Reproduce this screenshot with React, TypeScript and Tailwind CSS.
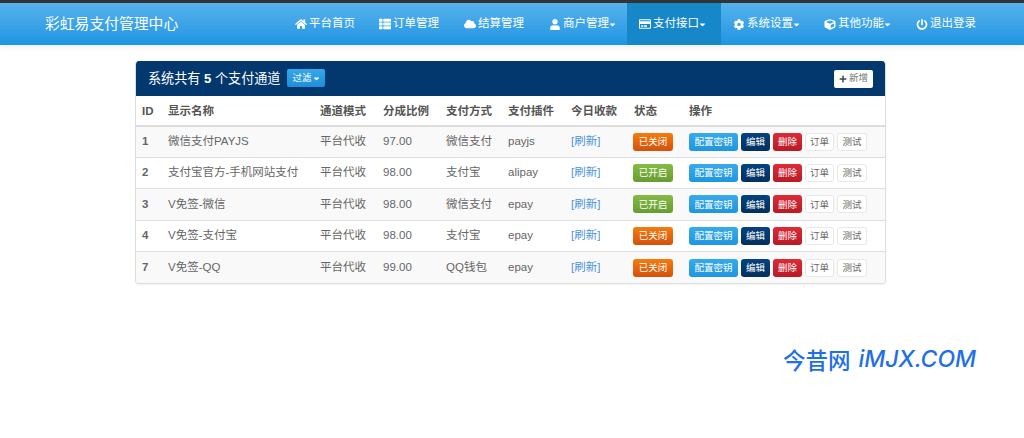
import { FaCaretDown, FaCloud, FaCog, FaCube, FaHome, FaPlus, FaPowerOff, FaRegCreditCard, FaThList, FaUser } from "react-icons/fa";
import type { IconType } from "react-icons";

const NAV: { label: string; icon: IconType; width: string; size: string; caret?: boolean; active?: boolean }[] = [
  { label: "平台首页", icon: FaHome, width: "w-[84px]", size: "h-[12px] w-[12px]" },
  { label: "订单管理", icon: FaThList, width: "w-[85px]", size: "h-[12px] w-[12px]" },
  { label: "结算管理", icon: FaCloud, width: "w-[85px]", size: "h-[12px] w-[12px]" },
  { label: "商户管理", icon: FaUser, width: "w-[90px]", size: "h-[11px] w-[12px]", caret: true },
  { label: "支付接口", icon: FaRegCreditCard, width: "w-[94px]", size: "h-[12px] w-[12px]", caret: true, active: true },
  { label: "系统设置", icon: FaCog, width: "w-[91px]", size: "h-[11px] w-[12px]", caret: true },
  { label: "其他功能", icon: FaCube, width: "w-[92px]", size: "h-[11px] w-[12px]", caret: true },
  { label: "退出登录", icon: FaPowerOff, width: "w-[84px]", size: "h-[11px] w-[12px]" },
];

const ROWS = [
  { id: 1, name: "微信支付PAYJS", ratio: "97.00", way: "微信支付", plugin: "payjs", on: false },
  { id: 2, name: "支付宝官方-手机网站支付", ratio: "98.00", way: "支付宝", plugin: "alipay", on: true },
  { id: 3, name: "V免签-微信", ratio: "98.00", way: "微信支付", plugin: "epay", on: true },
  { id: 4, name: "V免签-支付宝", ratio: "98.00", way: "支付宝", plugin: "epay", on: false },
  { id: 7, name: "V免签-QQ", ratio: "99.00", way: "QQ钱包", plugin: "epay", on: false },
];

const HEADS = ["ID", "显示名称", "通道模式", "分成比例", "支付方式", "支付插件", "今日收款", "状态", "操作"];
const WIDTHS = ["w-[25px]", "w-[152px]", "w-[63px]", "w-[63px]", "w-[62px]", "w-[63px]", "w-[63px]", "w-[55px]", ""];
const PADS = ["pl-[6px]", "pl-[7px]", "pl-[7px]", "pl-[7px]", "pl-[7px]", "pl-[7px]", "pl-[7px]", "pl-[7px]", "pl-[7px]"];

const BTN = "flex h-[18px] items-center justify-center rounded-[3px] text-[9.5px] leading-none";

export default function App() {
  return (
    <div className="relative min-h-[438px] bg-white font-['Liberation_Sans','Noto_Sans_CJK_SC',sans-serif] text-[11.5px] text-[#666]">
      {/* 顶部导航 */}
      <nav className="flex h-[45px] items-stretch justify-between border-t-[3px] border-[#333] bg-linear-to-b from-[#55b2ec] to-[#1b95e2] pl-[45px] pr-[36px] text-white shadow-[0_2px_6px_rgba(0,0,0,0.08)]">
        <div className="flex items-center text-[14.8px]">彩虹易支付管理中心</div>
        <div className="flex items-stretch">
          {NAV.map(item => (
            <div key={item.label} className={`flex items-center pl-[12px] ${item.width} ${item.active ? "bg-[#1688c9]" : ""}`}>
              <item.icon className={`mr-[2px] shrink-0 ${item.size}`} />
              <span>{item.label}</span>
              {item.caret && <FaCaretDown className="h-[9px] w-[7px] shrink-0" />}
            </div>
          ))}
        </div>
      </nav>

      {/* 支付通道列表 */}
      <div className="ml-[135px] mt-[16px] w-[751px] overflow-hidden rounded-[4px] border border-t-0 border-[#ddd] shadow-[0_1px_2px_rgba(0,0,0,0.05)]">
        <div className="flex h-[35px] items-center justify-between bg-[#03386f] pl-[12px] pr-[12px] text-[13.1px] text-white">
          <div className="flex items-center">
            <span>系统共有 <b>5</b> 个支付通道</span>
            <span className="ml-[7px] flex h-[18px] w-[38px] items-center justify-center gap-[2px] rounded-[2px] bg-linear-to-b from-[#34a8ea] to-[#1e8fd8] text-[9.5px]">
              过滤<FaCaretDown className="h-[9px] w-[7px]" />
            </span>
          </div>
          <span className="flex h-[18px] w-[39px] items-center justify-center gap-[2px] rounded-[2px] bg-white text-[9.5px] text-[#777]">
            <FaPlus className="h-[8px] w-[8px] text-[#444]" />新增
          </span>
        </div>
        <table className="w-full table-fixed border-collapse">
          <thead>
            <tr className="h-[30px] border-b-2 border-[#ddd] text-left text-[#555]">
              {HEADS.map((h, i) => (
                <th key={h} className={`p-0 pt-[2px] font-bold ${PADS[i]} ${WIDTHS[i]}`}>{h}</th>
              ))}
            </tr>
          </thead>
          <tbody>
            {ROWS.map((r, i) => (
              <tr key={r.id} className={`h-[31.4px] border-b border-[#ddd] last:border-b-0 ${i % 2 === 0 ? "bg-[#f9f9f9]" : "bg-white"}`}>
                <td className="p-0 pl-[6px] font-bold">{r.id}</td>
                <td className="p-0 pl-[7px]">{r.name}</td>
                <td className="p-0 pl-[7px]">平台代收</td>
                <td className="p-0 pl-[7px]">{r.ratio}</td>
                <td className="p-0 pl-[7px]">{r.way}</td>
                <td className="p-0 pl-[7px]">{r.plugin}</td>
                <td className="p-0 pl-[7px] text-[#4a94dc]">[刷新]</td>
                <td className="p-0 pl-[6px]">
                  <span className={`${BTN} w-[40px] text-white ${r.on ? "bg-linear-to-b from-[#84bc44] to-[#689c30]" : "bg-linear-to-b from-[#f57c0c] to-[#d4500c]"}`}>
                    {r.on ? "已开启" : "已关闭"}
                  </span>
                </td>
                <td className="p-0 pl-[7px]">
                  <div className="flex gap-[3px]">
                    <span className={`${BTN} w-[49px] bg-linear-to-b from-[#36aaec] to-[#1f96df] text-white`}>配置密钥</span>
                    <span className={`${BTN} w-[29px] bg-linear-to-b from-[#04437f] to-[#03305f] text-white`}>编辑</span>
                    <span className={`${BTN} w-[29px] bg-linear-to-b from-[#de2b38] to-[#b81a25] text-white`}>删除</span>
                    <span className={`${BTN} w-[29px] border border-[#e8e8e8] bg-white text-[#666]`}>订单</span>
                    <span className={`${BTN} w-[30px] border border-[#e8e8e8] bg-white text-[#666]`}>测试</span>
                  </div>
                </td>
              </tr>
            ))}
          </tbody>
        </table>
      </div>

      {/* 水印 */}
      <div className="absolute left-[783px] top-[345px] flex items-center text-[22.5px] font-medium leading-[28px] text-[#1f6fe6]">
        <span className="font-['Noto_Sans_CJK_SC',sans-serif]">今昔网</span>
        <span className="ml-[8px] font-['Inter',sans-serif] text-[23px] italic">iMJX.COM</span>
      </div>
    </div>
  );
}
